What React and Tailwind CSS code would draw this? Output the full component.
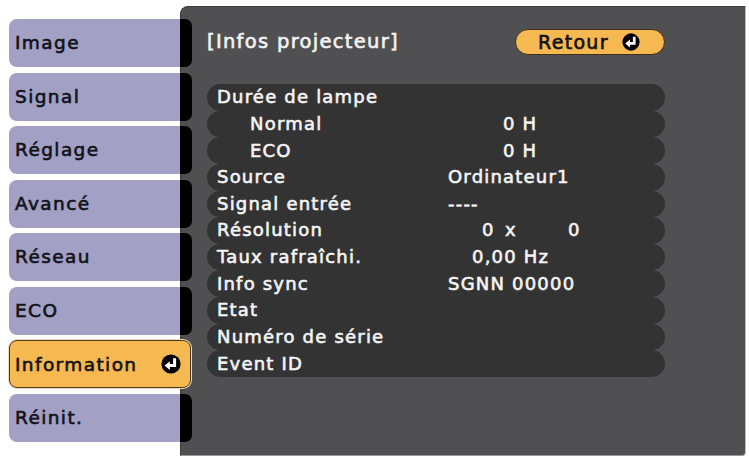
import React from "react";

const menu = ["Image", "Signal", "Réglage", "Avancé", "Réseau", "ECO", "Information", "Réinit."];

function EnterIcon({ size = 18 }) {
  return (
    <svg width={size} height={size} viewBox="0 0 20 20">
      <circle cx="10" cy="10" r="9.6" fill="#000" />
      <path d="M13.6 4.2 V11.6 H8" fill="none" stroke="#fff" strokeWidth="3" strokeLinecap="butt" />
      <path d="M3.6 11.6 L8.8 7.2 L8.8 16 Z" fill="#fff" />
    </svg>
  );
}

const rows = [
  { label: "Durée de lampe" },
  { label: "Normal", sub: true, value: <span className="pl-[55px]">0 H</span> },
  { label: "ECO", sub: true, value: <span className="pl-[55px]">0 H</span> },
  { label: "Source", value: <span>Ordinateur1</span> },
  { label: "Signal entrée", value: <span>----</span> },
  {
    label: "Résolution",
    value: (
      <span className="flex pl-[34px]">
        <span className="w-[23px]">0</span>
        <span className="w-[63px]">x</span>
        <span>0</span>
      </span>
    ),
  },
  { label: "Taux rafraîchi.", value: <span className="pl-[24px]">0,00 Hz</span> },
  { label: "Info sync", value: <span>SGNN 00000</span> },
  { label: "Etat" },
  { label: "Numéro de série" },
  { label: "Event ID" },
];

export default function App() {
  return (
    <div
      className="w-[749px] h-[462px] bg-white flex overflow-hidden font-normal [-webkit-text-stroke:0.6px_currentColor]"
      style={{ fontFamily: '"DejaVu Sans", Verdana, sans-serif' }}
    >
      <div className="relative z-10 flex flex-col gap-[5.57px] pt-[19px] pl-[9px]">
        {menu.map((m) =>
          m === "Information" ? (
            <div
              key={m}
              className="w-[182px] h-[48px] rounded-[8px] bg-[#f6b851] border border-[#4a3a22] shadow-[0_0_0_1px_#e8d9b8] flex items-center justify-between pl-[5px] pr-[9px] text-[18.5px] tracking-[1.4px] text-[#121218]"
            >
              <span>{m}</span>
              <EnterIcon size={20} />
            </div>
          ) : (
            <div key={m} className="flex h-[48px]">
              <div className="w-[171px] h-full rounded-l-[8px] bg-[#a2a0c5] flex items-center pl-[6px] text-[18.5px] tracking-[1.4px] text-[#121218]">
                {m}
              </div>
              <div className="w-[12px] h-full bg-black rounded-r-[7px]" />
            </div>
          )
        )}
      </div>

      <div className="ml-[-12px] mt-[6px] w-[566px] h-[450px] bg-[#505052] rounded-tl-[8px] rounded-br-[4px] border border-[#3a3a3a] border-r-[#bdbdbd] border-b-[#9a9a9a] pl-[26px] pt-[22px]">
        <div className="w-[458px] h-[26px] flex items-center justify-between">
          <span className="text-[19.5px] text-[#f2f2f2] tracking-[1.3px]">[Infos projecteur]</span>
          <div className="w-[150px] h-[26px] rounded-full bg-[#f6b851] border border-[#3d2f1a] flex items-center pl-[22px] text-[19px] tracking-[1.3px] text-[#111]">
            <span>Retour</span>
            <span className="ml-[13px] flex">
              <EnterIcon size={18} />
            </span>
          </div>
        </div>
        <div className="mt-[29px] flex flex-col w-[458px]">
          {rows.map((r) => (
            <div
              key={r.label}
              className="h-[26.64px] rounded-full bg-[#333334] flex items-center text-[18px] tracking-[1.2px] text-[#f4f4f4] leading-none"
            >
              <span className={r.sub ? "w-[241px] pl-[43px]" : "w-[241px] pl-[10px]"}>{r.label}</span>
              {r.value}
            </div>
          ))}
        </div>
      </div>
    </div>
  );
}
